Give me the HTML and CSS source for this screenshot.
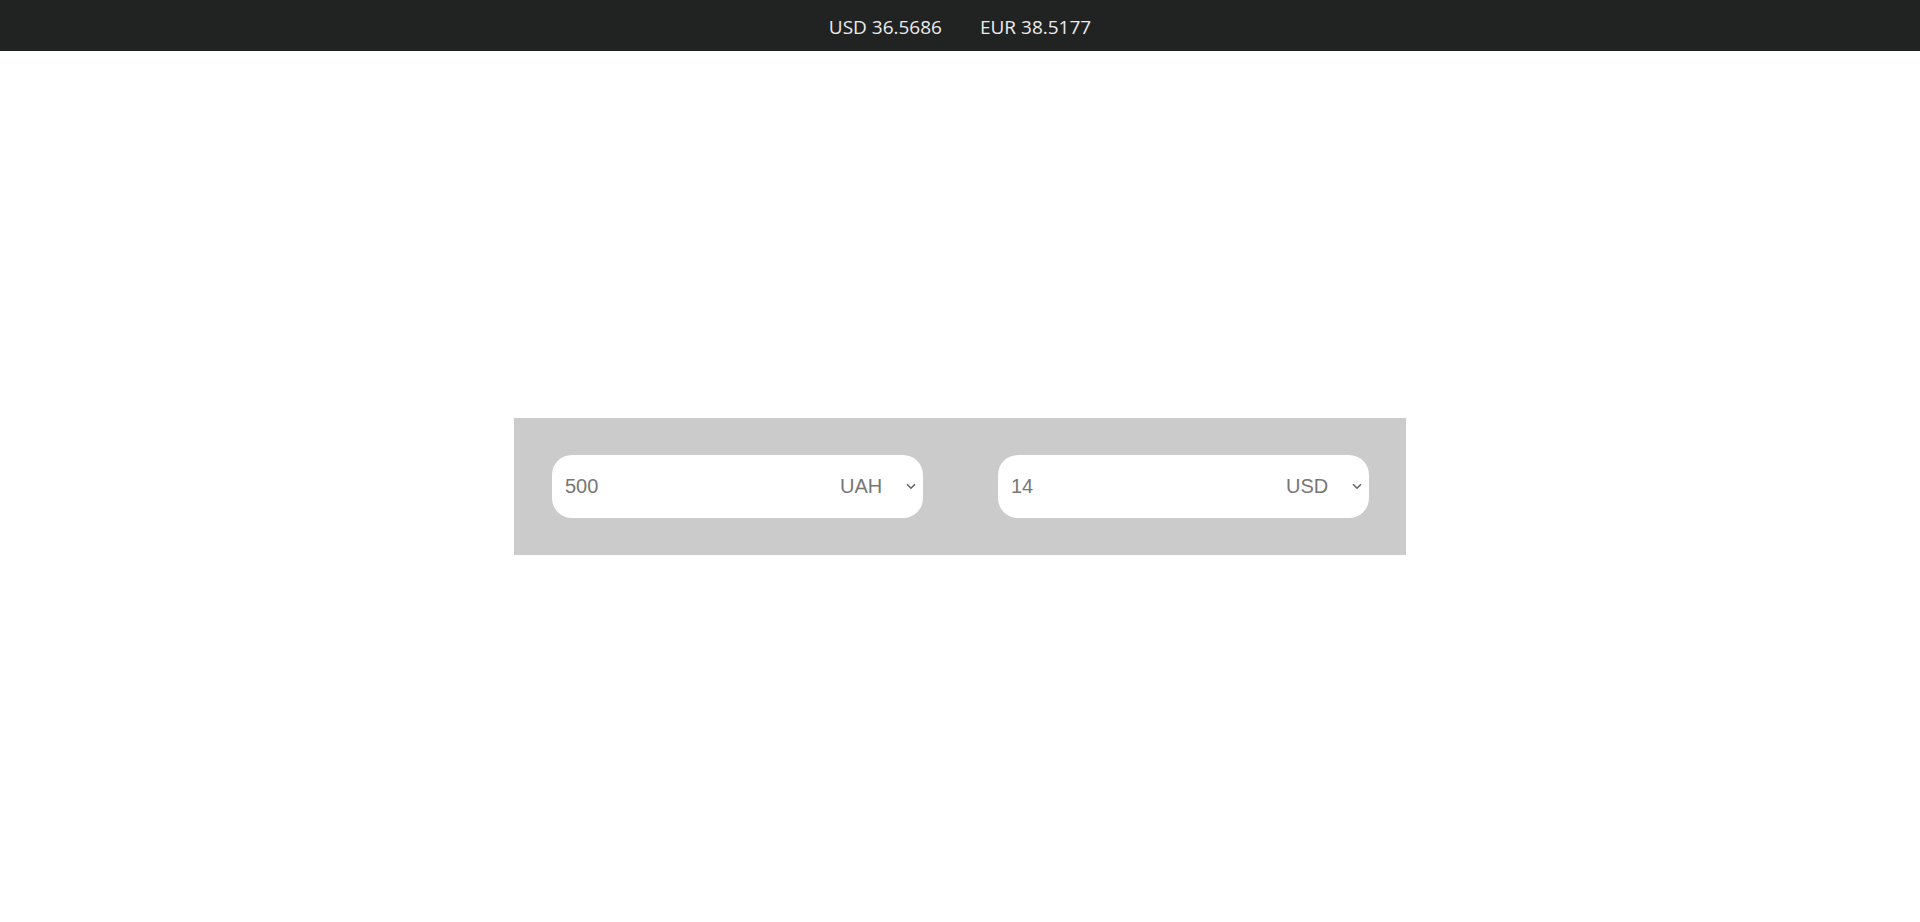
FILE: index.html
```html
<!DOCTYPE html>
<html lang="en">
<head>
<meta charset="utf-8">
<title>Currency converter</title>
<link rel="stylesheet" href="styles.css">
</head>
<body>
<header class="rates">
  <span class="rate">USD 36.5686</span>
  <span class="rate">EUR 38.5177</span>
</header>
<main class="main">
  <div class="converter">
    <div class="field">
      <input class="amount" type="text" value="500">
      <select class="currency">
        <option selected>UAH</option>
        <option>USD</option>
        <option>EUR</option>
      </select>
      <svg class="chevron" width="10" height="7" viewBox="0 0 10 7"><path d="M1 1.2 L5 5.2 L9 1.2" fill="none" stroke="#666" stroke-width="1.6"/></svg>
    </div>
    <div class="field">
      <input class="amount" type="text" value="14">
      <select class="currency">
        <option>UAH</option>
        <option selected>USD</option>
        <option>EUR</option>
      </select>
      <svg class="chevron" width="10" height="7" viewBox="0 0 10 7"><path d="M1 1.2 L5 5.2 L9 1.2" fill="none" stroke="#666" stroke-width="1.6"/></svg>
    </div>
  </div>
</main>
</body>
</html>
```
FILE: styles.css
```css
* { box-sizing: border-box; }
html, body { margin: 0; padding: 0; height: 100%; }
body {
  display: flex;
  flex-direction: column;
  background: #fff;
  font-family: "Liberation Sans", Arial, sans-serif;
}
.rates {
  height: 51px;
  flex: 0 0 51px;
  background: #212322;
  display: flex;
  align-items: center;
  justify-content: center;
  gap: 38px;
  padding-top: 3px;
  font-family: "Open Sans", sans-serif;
  font-size: 19px;
  color: #ececec;
}
.main {
  flex: 1;
  display: flex;
  align-items: center;
  justify-content: center;
}
.converter {
  width: 892px;
  height: 137px;
  background: #cbcbcb;
  padding: 37px 37px 37px 38px;
  display: flex;
  justify-content: space-between;
}
.field {
  width: 371px;
  height: 63px;
  background: #fff;
  border-radius: 20px;
  display: flex;
  align-items: center;
  padding: 0 7px 0 13px;
}
.amount {
  flex: 1;
  min-width: 0;
  border: none;
  outline: none;
  background: transparent;
  font-family: "Liberation Sans", Arial, sans-serif;
  font-size: 20px;
  color: #777;
  padding: 0 0 1px 0;
}
.currency {
  -webkit-appearance: none;
  appearance: none;
  border: none;
  outline: none;
  background: transparent;
  font-family: "Liberation Sans", Arial, sans-serif;
  font-size: 20px;
  color: #777;
  padding: 0 0 2px 0;
  margin-right: 23px;
}
.chevron { flex: 0 0 auto; }
```
